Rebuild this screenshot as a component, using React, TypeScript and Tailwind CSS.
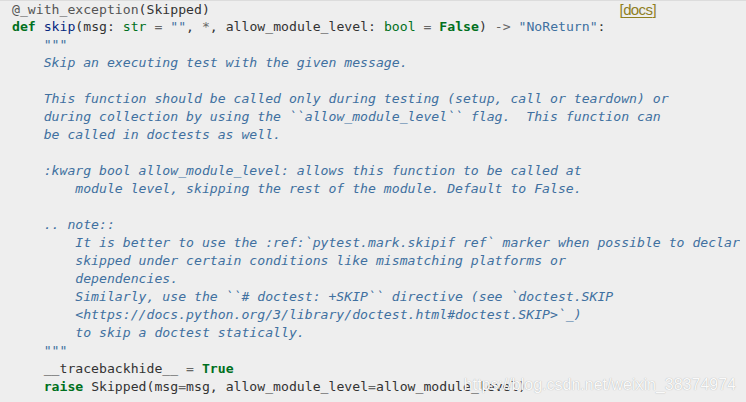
import React from "react";

type Tok = { t: string; c?: string };

const KW = "text-[#007020] font-bold";
const BI = "text-[#007020]";
const OP = "text-[#666666]";
const STR = "text-[#4070a0]";
const DOC = "text-[#4070a0] italic";

const doc = (s: string): Tok[] => (s ? [{ t: s, c: DOC }] : []);

const LINES: Tok[][] = [
  [
    { t: "def", c: KW },
    { t: " " },
    { t: "skip", c: "text-[#06287e]" },
    { t: "(msg: " },
    { t: "str", c: BI },
    { t: " " },
    { t: "=", c: OP },
    { t: " " },
    { t: '""', c: STR },
    { t: ", " },
    { t: "*", c: OP },
    { t: ", allow_module_level: " },
    { t: "bool", c: BI },
    { t: " " },
    { t: "=", c: OP },
    { t: " " },
    { t: "False", c: KW },
    { t: ") " },
    { t: "->", c: OP },
    { t: " " },
    { t: '"NoReturn"', c: STR },
    { t: ":" },
  ],
  [{ t: "    " }, ...doc('"""')],
  [{ t: "    " }, ...doc("Skip an executing test with the given message.")],
  [],
  [
    { t: "    " },
    ...doc(
      "This function should be called only during testing (setup, call or teardown) or",
    ),
  ],
  [
    { t: "    " },
    ...doc(
      "during collection by using the ``allow_module_level`` flag.  This function can",
    ),
  ],
  [{ t: "    " }, ...doc("be called in doctests as well.")],
  [],
  [
    { t: "    " },
    ...doc(":kwarg bool allow_module_level: allows this function to be called at"),
  ],
  [
    { t: "        " },
    ...doc("module level, skipping the rest of the module. Default to False."),
  ],
  [],
  [{ t: "    " }, ...doc(".. note::")],
  [
    { t: "        " },
    ...doc(
      "It is better to use the :ref:`pytest.mark.skipif ref` marker when possible to declare a test to be",
    ),
  ],
  [
    { t: "        " },
    ...doc("skipped under certain conditions like mismatching platforms or"),
  ],
  [{ t: "        " }, ...doc("dependencies.")],
  [
    { t: "        " },
    ...doc("Similarly, use the ``# doctest: +SKIP`` directive (see `doctest.SKIP"),
  ],
  [
    { t: "        " },
    ...doc("<https://docs.python.org/3/library/doctest.html#doctest.SKIP>`_)"),
  ],
  [{ t: "        " }, ...doc("to skip a doctest statically.")],
  [{ t: "    " }, ...doc('"""')],
  [
    { t: "    __tracebackhide__ " },
    { t: "=", c: OP },
    { t: " " },
    { t: "True", c: KW },
  ],
  [
    { t: "    " },
    { t: "raise", c: KW },
    { t: " Skipped(msg" },
    { t: "=", c: OP },
    { t: "msg, allow_module_level" },
    { t: "=", c: OP },
    { t: "allow_module_level)" },
  ],
];

function Line({ toks }: { toks: Tok[] }) {
  return (
    <div className="h-[18px] leading-[18px] whitespace-pre">
      {toks.length === 0
        ? " "
        : toks.map((k, i) => (
            <span key={i} className={k.c}>
              {k.t}
            </span>
          ))}
    </div>
  );
}

export default function App() {
  return (
    <div className="relative w-[746px] h-[402px] overflow-hidden bg-[#eeeeee] border-t border-[#dcdcdc]">
      <div className="w-[740px] overflow-hidden pl-[12px] text-[13.15px] text-[#333333] font-['DejaVu_Sans_Mono',monospace]">
        {/* decorator line with the viewcode link */}
        <div className="flex justify-between h-[17px] leading-[17px]">
          <span className="whitespace-pre">
            <span className="text-[#555555]">@_with_exception</span>(Skipped)
          </span>
          <a
            href="#"
            className="mr-[84px] text-[15px] tracking-[-0.6px] text-[#8f7f1e] font-['Liberation_Sans',Arial,sans-serif] leading-[17px]"
          >
            [<span className="underline underline-offset-2">docs</span>]
          </a>
        </div>
        {LINES.map((toks, i) => (
          <Line key={i} toks={toks} />
        ))}
      </div>

      {/* csdn watermark */}
      <div className="absolute right-[10px] bottom-[5px] text-[16px] text-[#fafafa] font-['Liberation_Sans',Arial,sans-serif] [text-shadow:0_0_1px_#a0a0a0]">
        https://blog.csdn.net/weixin_38374974
      </div>
    </div>
  );
}
